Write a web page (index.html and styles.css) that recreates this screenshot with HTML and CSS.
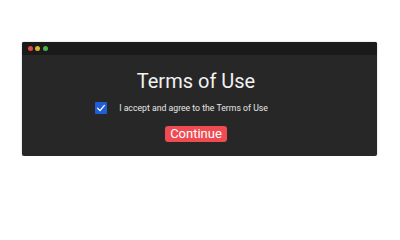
FILE: index.html
```html
<!DOCTYPE html>
<html lang="en">
<head>
<meta charset="utf-8">
<title>Terms of Use</title>
<link rel="stylesheet" href="styles.css">
</head>
<body>
<div class="window">
  <div class="titlebar">
    <span class="dot dot-red"></span>
    <span class="dot dot-yellow"></span>
    <span class="dot dot-green"></span>
  </div>
  <div class="content">
    <h1 class="title">Terms of Use</h1>
    <label class="agree">
      <span class="checkbox">
        <svg viewBox="0 0 12 12" width="12" height="12"><path d="M2.6 6.3 L5 8.6 L9.4 3.4" fill="none" stroke="#fff" stroke-width="1.3" stroke-linecap="round" stroke-linejoin="round"/></svg>
      </span>
      <span class="agree-text">I accept and agree to the Terms of Use</span>
    </label>
    <button class="continue" type="button">Continue</button>
  </div>
</div>
</body>
</html>
```
FILE: styles.css
```css
html, body {
  margin: 0;
  padding: 0;
  background: #ffffff;
}
body {
  font-family: Roboto, "Liberation Sans", sans-serif;
  padding: 42px 0 0 22px;
}
.window {
  width: 355px;
  height: 114px;
  background: #272727;
  border-radius: 2px;
  box-shadow: 0 0 2px rgba(0,0,0,0.25);
  display: flex;
  flex-direction: column;
  overflow: hidden;
}
.titlebar {
  height: 13px;
  background: #1a1a1a;
  display: flex;
  align-items: center;
  gap: 2.5px;
  padding-left: 5.5px;
  flex: none;
}
.dot {
  width: 5px;
  height: 5px;
  border-radius: 50%;
}
.dot-red { background: #e2484a; }
.dot-yellow { background: #dcb130; }
.dot-green { background: #4db04a; }
.content {
  display: flex;
  flex-direction: column;
  align-items: center;
  padding: 14px 7px 0 0;
}
.title {
  margin: 0;
  font-size: 20px;
  line-height: 24px;
  font-weight: 400;
  color: #f2f2f2;
}
.agree {
  display: flex;
  align-items: center;
  gap: 12px;
  margin-top: 9px;
  margin-right: 29px;
}
.checkbox {
  width: 12px;
  height: 12px;
  background: #1f5ed6;
  border-radius: 1px;
  display: flex;
}
.agree-text {
  font-size: 8.7px;
  color: #e6e6e6;
  line-height: 12px;
}
.continue {
  margin-top: 12px;
  font-family: Roboto, "Liberation Sans", sans-serif;
  font-size: 13px;
  line-height: 16px;
  padding: 0 5px;
  color: #ffffff;
  background: #ee4b52;
  border: none;
  border-radius: 3px;
}
```
